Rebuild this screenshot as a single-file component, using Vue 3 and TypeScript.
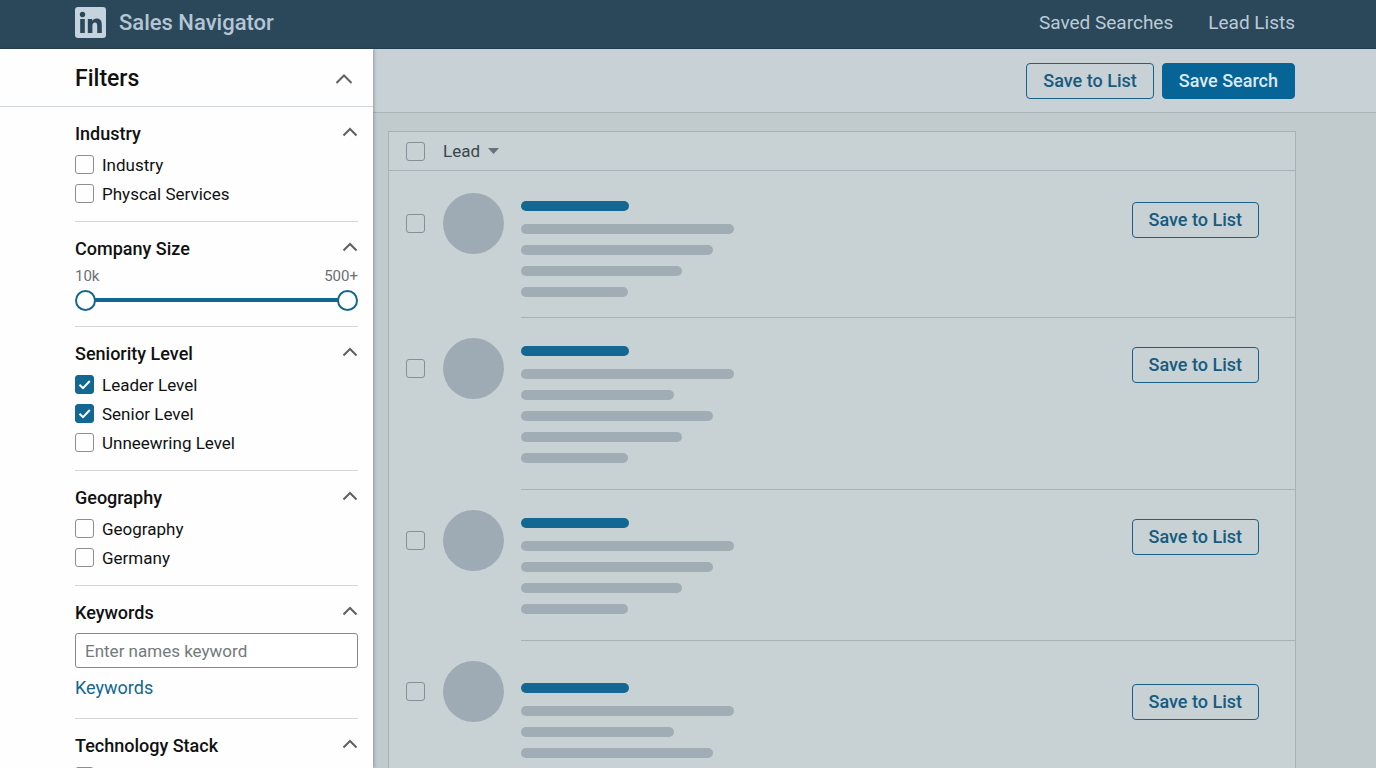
<script setup lang="ts">
import { reactive, ref } from 'vue'

interface Option {
  label: string
  checked: boolean
}

interface Lead {
  id: number
  variant: string
  lines: string[]
}

const industry = reactive<Option[]>([
  { label: 'Industry', checked: false },
  { label: 'Physcal Services', checked: false },
])
const seniority = reactive<Option[]>([
  { label: 'Leader Level', checked: true },
  { label: 'Senior Level', checked: true },
  { label: 'Unneewring Level', checked: false },
])
const geography = reactive<Option[]>([
  { label: 'Geography', checked: false },
  { label: 'Germany', checked: false },
])

const sections = [
  { id: 'industry', title: 'Industry', kind: 'options', options: industry },
  { id: 'size', title: 'Company Size', kind: 'range', options: [] as Option[] },
  { id: 'seniority', title: 'Seniority Level', kind: 'options', options: seniority },
  { id: 'geography', title: 'Geography', kind: 'options', options: geography },
  { id: 'keywords', title: 'Keywords', kind: 'keywords', options: [] as Option[] },
  { id: 'tech', title: 'Technology Stack', kind: 'tech', options: [] as Option[] },
]

const leads: Lead[] = [
  { id: 1, variant: 'first', lines: ['xl', 'lg', 'md', 'sm'] },
  { id: 2, variant: '', lines: ['xl', 'm2', 'lg', 'md', 'sm'] },
  { id: 3, variant: '', lines: ['xl', 'lg', 'md', 'sm'] },
  { id: 4, variant: 'low', lines: ['xl', 'm2', 'lg', 'md', 'sm'] },
]

const keyword = ref('')
const low = ref(0)
const high = ref(100)
</script>

<template>
  <div class="app">
    <header class="topbar">
      <a href="#" class="brand">
        <svg class="logo" viewBox="0 0 31 31" aria-hidden="true">
          <rect width="31" height="31" rx="3" fill="#c5d3df" />
          <circle cx="7.5" cy="7.5" r="2.7" fill="#2b475b" />
          <rect x="5.2" y="12" width="4.6" height="14" fill="#2b475b" />
          <path d="M12.8 12h4.4v1.9c.8-1.3 2.3-2.3 4.4-2.3 3.9 0 5.2 2.4 5.2 6.3V26h-4.6v-7.2c0-1.9-.5-3.3-2.2-3.3-1.8 0-2.6 1.3-2.6 3.3V26h-4.6z" fill="#2b475b" />
        </svg>
        <span>Sales Navigator</span>
      </a>
      <nav class="nav">
        <a href="#">Saved Searches</a>
        <a href="#">Lead Lists</a>
      </nav>
    </header>

    <div class="body">
      <aside class="sidebar">
        <div class="sidebar-head">
          <h1>Filters</h1>
          <button type="button" class="toggle" aria-label="Collapse filters">
            <svg width="18" height="12" viewBox="0 0 18 12"><path d="M1.5 10 9 2.5 16.5 10" /></svg>
          </button>
        </div>

        <div class="sections">
          <section v-for="s in sections" :key="s.id" class="section">
            <div class="section-head">
              <h2>{{ s.title }}</h2>
              <button type="button" class="toggle" :aria-label="'Collapse ' + s.title">
                <svg width="16" height="10" viewBox="0 0 16 10"><path d="M1.5 8.5 8 2 14.500 8.500" /></svg>
              </button>
            </div>

            <div v-if="s.kind === 'options'" class="options">
              <label v-for="o in s.options" :key="o.label" class="option">
                <span class="check">
                  <input v-model="o.checked" type="checkbox" />
                  <svg v-if="o.checked" viewBox="0 0 19 19"><path d="M4.500 9.800 8 13.200 14.800 6" /></svg>
                </span>
                <span>{{ o.label }}</span>
              </label>
            </div>

            <div v-else-if="s.kind === 'range'" class="range">
              <div class="range-labels">
                <label for="size-min">10k</label>
                <label for="size-max">500+</label>
              </div>
              <div class="slider">
                <span class="track"></span>
                <input id="size-min" v-model="low" type="range" min="0" max="100" />
                <input id="size-max" v-model="high" type="range" min="0" max="100" />
              </div>
            </div>

            <div v-else-if="s.kind === 'keywords'" class="keywords">
              <input v-model="keyword" type="text" placeholder="Enter names keyword" aria-label="Keywords" />
              <a href="#">Keywords</a>
            </div>

            <div v-else class="options">
              <div class="option">
                <span class="check"><input type="checkbox" :aria-label="s.title" /></span>
              </div>
            </div>
          </section>
        </div>
      </aside>

      <main class="main">
        <div class="toolbar">
          <button type="button" class="btn">Save to List</button>
          <button type="button" class="btn primary">Save Search</button>
        </div>

        <div class="list-area">
          <div class="card">
            <div class="card-head">
              <span class="check muted"><input type="checkbox" aria-label="Select all leads" /></span>
              <button type="button" class="sort">
                <span>Lead</span>
                <svg width="11" height="6" viewBox="0 0 11 6"><path d="M0 0h11L5.500 6z" /></svg>
              </button>
            </div>

            <article v-for="lead in leads" :key="lead.id" class="lead" :class="lead.variant">
              <div class="identity">
                <span class="check muted"><input type="checkbox" :aria-label="'Select lead ' + lead.id" /></span>
                <span class="avatar"></span>
              </div>
              <div class="details">
                <div class="lines">
                  <span class="line name"></span>
                  <span v-for="(l, i) in lead.lines" :key="i" class="line" :class="l"></span>
                </div>
                <button type="button" class="btn">Save to List</button>
              </div>
            </article>
          </div>
        </div>
      </main>
    </div>
  </div>
</template>

<style>
body {
  margin: 0;
}
</style>

<style scoped>
.app {
  display: flex;
  flex-direction: column;
  height: 100vh;
  overflow: hidden;
  font-family: Roboto, "Liberation Sans", sans-serif;
  color: #111;
  background: #c1cacc;
}
.app *,
.app *::before {
  box-sizing: border-box;
}
button,
input {
  font-family: inherit;
  margin: 0;
}
button {
  cursor: pointer;
}
a {
  text-decoration: none;
}

.topbar {
  flex: none;
  display: flex;
  align-items: center;
  justify-content: space-between;
  height: 49px;
  padding: 0 81px 3px 75px;
  background: #2b475a;
  border-bottom: 1px solid #203c50;
}
.brand {
  display: flex;
  align-items: center;
  gap: 13px;
  color: #b4c6d3;
  font-size: 22px;
  font-weight: 500;
  line-height: 30px;
}
.logo {
  display: block;
  width: 31px;
  height: 31px;
}
.nav {
  display: flex;
  gap: 35px;
}
.nav a {
  color: #bccbd6;
  font-size: 19px;
  line-height: 24px;
}

.body {
  flex: 1;
  display: flex;
  min-height: 0;
}
.sidebar {
  flex: none;
  display: flex;
  flex-direction: column;
  width: 373px;
  background: #fefefe;
  box-shadow: 1px 0 3px rgba(60, 80, 90, 0.4);
  z-index: 1;
}
.sidebar-head {
  flex: none;
  display: flex;
  align-items: center;
  justify-content: space-between;
  height: 58px;
  padding: 2px 20px 0 75px;
  border-bottom: 1px solid #d3d6d8;
}
h1,
h2 {
  margin: 0;
  font-weight: 500;
}
h1 {
  font-size: 23px;
  line-height: 30px;
}
h2 {
  font-size: 18px;
  line-height: 24px;
}
.toggle {
  display: block;
  padding: 0;
  border: 0;
  background: none;
}
.toggle svg {
  display: block;
  fill: none;
  stroke: #5c6165;
  stroke-width: 2;
}
.sections {
  flex: 1;
  min-height: 0;
  padding: 0 15px 0 75px;
  overflow-y: auto;
  scrollbar-width: none;
}
.section {
  padding-top: 15px;
  border-bottom: 1px solid #d3d6d8;
}
.section-head {
  display: flex;
  align-items: flex-start;
  justify-content: space-between;
  margin-bottom: 4px;
}
.section-head .toggle {
  padding-top: 5px;
}
.options {
  padding-bottom: 13px;
}
.option {
  display: flex;
  align-items: center;
  gap: 8px;
  height: 29px;
  font-size: 17px;
  line-height: 24px;
}
.check {
  display: grid;
  flex: none;
  width: 19px;
  height: 19px;
}
.check input,
.check svg {
  grid-area: 1 / 1;
  width: 19px;
  height: 19px;
}
.check input {
  appearance: none;
  border: 1px solid #8b8f92;
  border-radius: 3px;
  background: transparent;
}
.check input:checked {
  border-color: #126892;
  background: #126892;
}
.check svg {
  fill: none;
  stroke: #fff;
  stroke-width: 2;
  pointer-events: none;
}
.check.muted input {
  border-color: #84909a;
}

.range {
  padding: 2px 0 11px;
}
.range-labels {
  display: flex;
  justify-content: space-between;
  color: #6c7073;
  font-size: 15px;
  line-height: 18px;
}
.slider {
  display: grid;
  align-items: center;
  height: 30px;
}
.track,
.slider input {
  grid-area: 1 / 1;
}
.track {
  height: 4px;
  margin: 0 10px;
  background: #11678f;
}
.slider input {
  appearance: none;
  width: 100%;
  height: 21px;
  background: transparent;
  pointer-events: none;
}
.slider input::-webkit-slider-thumb {
  appearance: none;
  box-sizing: border-box;
  width: 21px;
  height: 21px;
  border: 2px solid #11678f;
  border-radius: 50%;
  background: #fff;
  pointer-events: auto;
}

.keywords {
  display: flex;
  flex-direction: column;
  align-items: flex-start;
  gap: 8px;
  padding: 4px 0 18px;
}
.keywords input {
  width: 100%;
  height: 35px;
  padding: 0 9px;
  border: 1px solid #85898c;
  border-radius: 3px;
  background: #fff;
  font-size: 17px;
}
.keywords input::placeholder {
  color: #75797c;
  opacity: 1;
}
.keywords a {
  color: #11678f;
  font-size: 18px;
  line-height: 24px;
}

.main {
  flex: 1;
  display: flex;
  flex-direction: column;
  min-width: 0;
}
.toolbar {
  flex: none;
  display: flex;
  justify-content: flex-end;
  align-items: center;
  gap: 8px;
  height: 64px;
  padding: 0 81px;
  background: #c8d1d5;
  border-bottom: 1px solid #a9b4ba;
}
.btn {
  height: 36px;
  padding: 0 16px;
  border: 1px solid #1a6288;
  border-radius: 4px;
  background: transparent;
  color: #165b80;
  font-size: 18px;
  font-weight: 500;
  line-height: 24px;
  white-space: nowrap;
}
.btn.primary {
  border-color: #076497;
  background: #076497;
  color: #dbe9f1;
}
.list-area {
  flex: 1;
  min-height: 0;
  padding: 18px 80px 0 15px;
  overflow-y: auto;
  scrollbar-width: none;
}
.card {
  border: 1px solid #a7b2b8;
  background: #c8d1d4;
}
.card-head {
  display: flex;
  align-items: center;
  gap: 18px;
  height: 39px;
  padding-left: 17px;
  border-bottom: 1px solid #a7b2b8;
}
.sort {
  display: flex;
  align-items: center;
  gap: 8px;
  padding: 0;
  border: 0;
  background: none;
  color: #3a454d;
  font-size: 17px;
  line-height: 24px;
}
.sort svg {
  display: block;
  fill: #66727a;
}
.lead {
  display: flex;
  align-items: flex-start;
  gap: 17px;
  padding-left: 17px;
}
.identity {
  display: flex;
  align-items: center;
  gap: 18px;
  padding-top: 20px;
}
.avatar {
  width: 61px;
  height: 61px;
  border-radius: 50%;
  background: #9eabb4;
}
.details {
  flex: 1;
  display: flex;
  align-items: flex-start;
  justify-content: space-between;
  min-width: 0;
  padding: 28px 36px 26px 0;
  border-bottom: 1px solid #a7b2b8;
}
.details .btn {
  margin-top: 1px;
}
.lead.first .identity {
  padding-top: 22px;
}
.lead.first .details {
  padding-top: 30px;
  padding-bottom: 20px;
}
.lead.low .details {
  padding-top: 42px;
}
.lines {
  display: flex;
  flex-direction: column;
  gap: 11px;
}
.line {
  height: 10px;
  border-radius: 5px;
  background: #a1adb5;
}
.line.name {
  width: 108px;
  margin-bottom: 2px;
  background: #126892;
}
.line.xl {
  width: 213px;
}
.line.lg {
  width: 192px;
}
.line.md {
  width: 161px;
}
.line.m2 {
  width: 153px;
}
.line.sm {
  width: 107px;
}
</style>
